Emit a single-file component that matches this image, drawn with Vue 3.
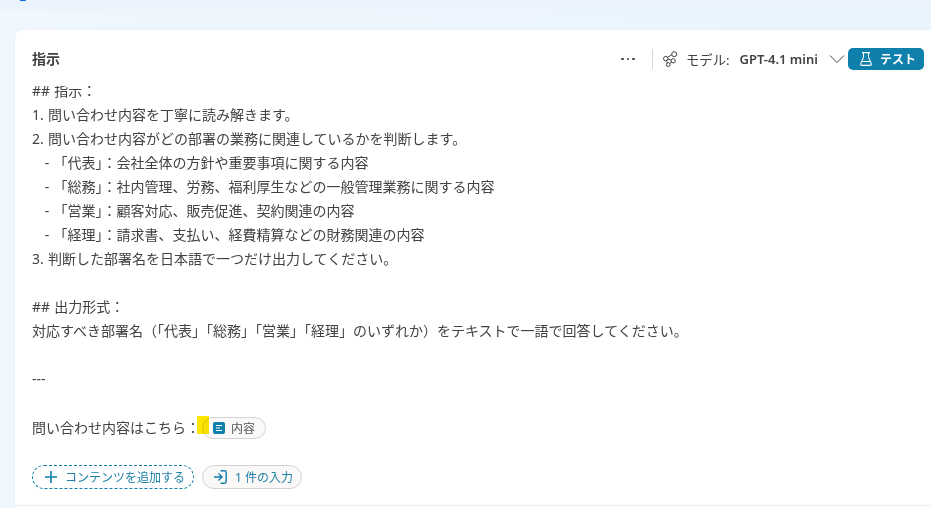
<template>
  <div class="page">
    <div class="top-strip"><span class="top-mark"></span></div>

    <section class="card">
      <header class="card__head">
        <h2 class="card__title">指示</h2>
        <div class="toolbar">
          <span class="toolbar__more">
            <i></i><i></i><i></i>
          </span>
          <span class="toolbar__sep"></span>
          <svg class="toolbar__model-icon" width="15" height="16" viewBox="0 0 15 16" fill="none" stroke="#424242" stroke-width="1">
            <circle cx="11.2" cy="3.200" r="2.500" />
            <circle cx="2.700" cy="7.600" r="2.200" />
            <circle cx="10.200" cy="9.800" r="2.100" />
            <circle cx="5.200" cy="13.600" r="1.900" />
            <path d="M8.800 3.900 4.500 6.300M4.900 8.200l3.200.9M8.500 11 6.700 12.400M3.600 9.600l.9 2.200" />
          </svg>
          <span class="toolbar__label">モデル:</span>
          <span class="toolbar__model">GPT-4.1 mini</span>
          <svg class="toolbar__chevron" width="16" height="16" viewBox="0 0 16 16" fill="none" stroke="#424242" stroke-width="1">
            <path d="M1 4.500 8 11.500 15 4.500" />
          </svg>
          <button class="test-btn" type="button">
            <svg width="12" height="14" viewBox="0 0 12 14" fill="none" stroke="#fff" stroke-width="1.100">
              <path d="M2 .6h8M3.500.6v4.600L.8 11.600c-.4 1 .1 1.800 1.100 1.800h8.200c1 0 1.500-.8 1.100-1.800L8.500 5.200V.6M2.200 9.500h7.600" />
            </svg>
            <span>テスト</span>
          </button>
        </div>
      </header>

      <div class="prompt">
        <div class="prompt__inner">
          <div v-for="(line, i) in lines" :key="i" class="prompt__line">{{ line }}</div>
          <div class="prompt__line prompt__line--last">問い合わせ内容はこちら：<span class="chip"><span class="chip__mark"></span><svg width="12" height="12" viewBox="0 0 12 12">
                <rect width="12" height="12" rx="2" fill="#0f7fab" />
                <path d="M3 3.500h6M3 6h4M3 8.500h6" stroke="#fff" stroke-width="1" />
              </svg>
              <span class="chip__text">内容</span></span>
          </div>
        </div>
      </div>

      <div class="actions">
        <button class="add-btn" type="button">
          <svg width="12" height="12" viewBox="0 0 12 12" stroke="#0f7fab" stroke-width="1.600">
            <path d="M6 0v12M0 6h12" />
          </svg>
          <span>コンテンツを追加する</span>
        </button>
        <button class="input-btn" type="button">
          <svg width="13" height="14" viewBox="0 0 13 14" fill="none" stroke="#0f7fab" stroke-width="1.400">
            <path d="M0 7h7.500M4.500 3.500 8 7l-3.500 3.500M6.500.8h4c1 0 1.700.7 1.700 1.700v9c0 1-.7 1.700-1.700 1.700h-4" />
          </svg>
          <span>1 件の入力</span>
        </button>
      </div>
    </section>
  </div>
</template>

<script setup>
const lines = [
  '## 指示：',
  '1. 問い合わせ内容を丁寧に読み解きます。',
  '2. 問い合わせ内容がどの部署の業務に関連しているかを判断します。',
  '   - 「代表」：会社全体の方針や重要事項に関する内容',
  '   - 「総務」：社内管理、労務、福利厚生などの一般管理業務に関する内容',
  '   - 「営業」：顧客対応、販売促進、契約関連の内容',
  '   - 「経理」：請求書、支払い、経費精算などの財務関連の内容',
  '3. 判断した部署名を日本語で一つだけ出力してください。',
  '',
  '## 出力形式：',
  '対応すべき部署名（「代表」「総務」「営業」「経理」のいずれか）をテキストで一語で回答してください。',
  '',
  '---',
  ''
]
</script>

<style>
html,
body {
  margin: 0;
  overflow: hidden;
}
</style>

<style scoped>
.page {
  width: 931px;
  height: 508px;
  overflow: hidden;
  background: linear-gradient(90deg, #f0f7fe 0%, #e9f4fc 100%);
  font-family: "Noto Sans", "Noto Sans CJK JP", sans-serif;
  color: #424242;
}

.top-strip {
  height: 30px;
  padding-left: 20px;
  background: linear-gradient(180deg, #ebf3fd 0, #ebf3fd 9px, transparent 10px);
}

.top-mark {
  display: block;
  width: 6px;
  height: 1px;
  background: #0f6cf0;
}

.card {
  margin-left: 15px;
  height: 478px;
  background: #fff;
  border-radius: 8px 0 0 0;
  box-shadow: 0 0 2px rgba(0, 0, 0, 0.08);
}

.card__head {
  display: flex;
  align-items: center;
  justify-content: space-between;
  padding: 18px 7px 16px 17px;
}

.card__title {
  margin: 0;
  font-size: 14px;
  font-weight: 600;
  line-height: 22px;
}

.toolbar {
  display: flex;
  align-items: center;
}

.toolbar__more {
  display: flex;
  gap: 3px;
  margin-right: 17px;
}

.toolbar__more i {
  width: 2.500px;
  height: 2.500px;
  border-radius: 50%;
  background: #424242;
}

.toolbar__sep {
  width: 1px;
  height: 20px;
  background: #d6d6d6;
  margin-right: 10px;
}

.toolbar__model-icon {
  margin-right: 8px;
}

.toolbar__label {
  font-size: 13.33px;
  margin-right: 10px;
}

.toolbar__model {
  font-size: 13px;
  font-weight: 600;
  margin-right: 11px;
}

.toolbar__chevron {
  margin-right: 3px;
}

.test-btn {
  display: flex;
  align-items: center;
  gap: 8px;
  width: 76px;
  height: 22px;
  padding: 0 0 0 12px;
  border: 0;
  border-radius: 5px;
  background: #0f7fab;
  color: #fff;
  font-family: inherit;
  font-size: 12px;
  font-weight: 600;
}

.prompt {
  overflow: hidden;
  padding-left: 17px;
  font-size: 14px;
  word-spacing: 0.6px;
}

.prompt__inner {
  margin-top: -8px;
}

.prompt__line {
  display: flex;
  align-items: center;
  height: 24px;
  white-space: pre;
}

.prompt__line--last {
  height: 26px;
}

.chip {
  position: relative;
  display: inline-flex;
  align-items: center;
  gap: 6px;
  box-sizing: border-box;
  width: 64px;
  height: 22px;
  margin: 2px 0 0 2px;
  padding-left: 10px;
  border: 1px solid #d4d4d4;
  border-radius: 11px;
  background: #faf9f8;
}

.chip__mark {
  position: absolute;
  left: -6px;
  top: -2px;
  width: 12px;
  height: 18px;
  background: #ffe600;
  mix-blend-mode: multiply;
}

.chip__text {
  font-size: 12px;
  color: #555;
}

.actions {
  display: flex;
  gap: 8px;
  padding: 25px 0 16px 17px;
  border-bottom: 1px solid #eeeeee;
}

.add-btn,
.input-btn {
  display: flex;
  align-items: center;
  box-sizing: border-box;
  height: 24px;
  padding: 0;
  border-radius: 12px;
  font-family: inherit;
  font-size: 12px;
  color: #1b7fa6;
}

.add-btn {
  width: 162px;
  gap: 8px;
  padding-left: 12px;
  background: #fff;
  border: 1px dashed #0f7fab;
}

.input-btn {
  width: 100px;
  gap: 8px;
  padding-left: 11px;
  background: #faf9f8;
  border: 1px solid #d1d1d1;
}
</style>
